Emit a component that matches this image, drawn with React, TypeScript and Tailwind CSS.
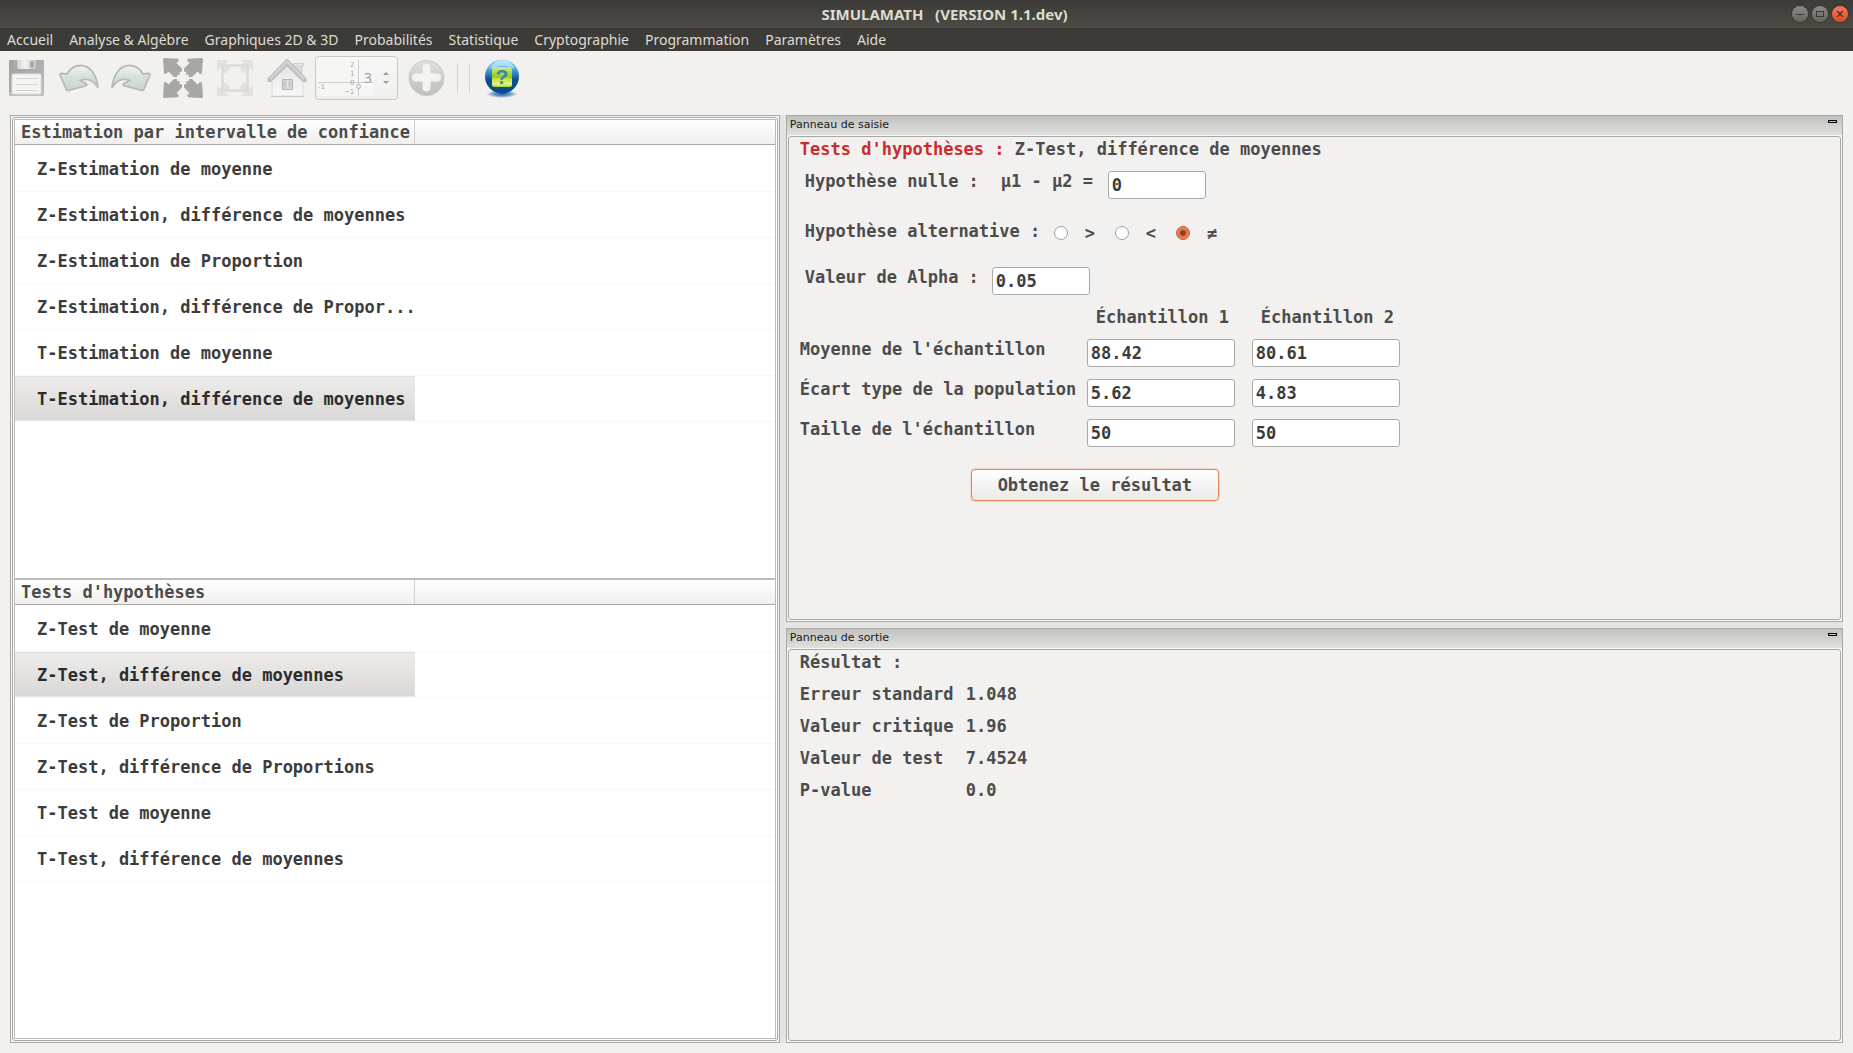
import type { ReactNode } from "react";

const menus = [
  "Accueil",
  "Analyse & Algèbre",
  "Graphiques 2D & 3D",
  "Probabilités",
  "Statistique",
  "Cryptographie",
  "Programmation",
  "Paramètres",
  "Aide",
];

const estimations = [
  "Z-Estimation de moyenne",
  "Z-Estimation, différence de moyennes",
  "Z-Estimation de Proportion",
  "Z-Estimation, différence de Propor...",
  "T-Estimation de moyenne",
  "T-Estimation, différence de moyennes",
];

const tests = [
  "Z-Test de moyenne",
  "Z-Test, différence de moyennes",
  "Z-Test de Proportion",
  "Z-Test, différence de Proportions",
  "T-Test de moyenne",
  "T-Test, différence de moyennes",
];

const samples = [
  { label: "Moyenne de l'échantillon", values: ["88.42", "80.61"] },
  { label: "Écart type de la population", values: ["5.62", "4.83"] },
  { label: "Taille de l'échantillon", values: ["50", "50"] },
];

const results = [
  ["Erreur standard", "1.048"],
  ["Valeur critique", "1.96"],
  ["Valeur de test", "7.4524"],
  ["P-value", "0.0"],
];

function SaveIcon() {
  return (
    <svg width="36" height="38" viewBox="0 0 36 38">
      <defs>
        <linearGradient id="disk" x1="0" y1="0" x2="1" y2="1">
          <stop offset="0" stopColor="#9f9f9e" />
          <stop offset=".6" stopColor="#b0b0ae" />
          <stop offset="1" stopColor="#bebdbb" />
        </linearGradient>
        <linearGradient id="shutter" x1="0" y1="0" x2="1" y2="0">
          <stop offset="0" stopColor="#d0d0d0" />
          <stop offset=".4" stopColor="#f3f3f3" />
          <stop offset="1" stopColor="#c8c8c8" />
        </linearGradient>
      </defs>
      <path d="M1 1h33l1 1v33q0 2-2 2H2q-2 0-2-2V2q0-1 1-1z" fill="url(#disk)" />
      <path d="M0 33h35v2q0 2-2 2H2q-2 0-2-2z" fill="#c4bfbe" />
      <path d="M4 1h24v10H6q-2 0-2-2z" fill="#a9a9a8" />
      <path d="M8 1h19v9H10q-2 0-2-2z" fill="url(#shutter)" />
      <rect x="21" y="2" width="4" height="7" fill="#a2a2a2" stroke="#c9c9c9" />
      <rect x="3" y="15" width="29" height="20" rx="1" fill="#f4f4f3" stroke="#dededd" />
      <path d="M7 19.500h22M7 25.500h22M7 31.500h22" stroke="#d4d4d3" />
    </svg>
  );
}

function CurvedArrow({ id }: { id: string }) {
  return (
    <svg width="40" height="28" viewBox="0 0 40 28">
      <defs>
        <linearGradient id={id} x1="0" y1="0" x2="0" y2="1">
          <stop offset="0" stopColor="#f2f4f2" />
          <stop offset=".45" stopColor="#d9e0d9" />
          <stop offset="1" stopColor="#cbd3cb" />
        </linearGradient>
      </defs>
      <path
        d="M1 11Q.8 9.500 2.200 9.500L8 10Q13 1.500 21.500 1.500C31 1.500 37.500 10 39 23.500 34 16 29 13.500 21 16.500l6.500 3.300q1 1-.3 1.800L9.500 26.400q-1.500.4-2.200-1z"
        fill={`url(#${id})`}
        stroke="#b7bcb7"
        strokeWidth="1.800"
        strokeLinejoin="round"
      />
    </svg>
  );
}

const cornerArrow = "M0 1L1 0 15 .8 16 2.500 13.500 5 19 10.500 19 13.500 16.500 14 17 17 14.500 16.500 14 19 11 19 5.500 13.500 3 16 1 15.500z";

function ExpandIcon() {
  return (
    <svg width="40" height="40" viewBox="0 0 40 40" fill="#a8a7a5">
      <path d={cornerArrow} />
      <path d={cornerArrow} transform="matrix(-1 0 0 1 40 0)" />
      <path d={cornerArrow} transform="matrix(1 0 0 -1 0 40)" />
      <path d={cornerArrow} transform="matrix(-1 0 0 -1 40 40)" />
    </svg>
  );
}

function FitIcon() {
  return (
    <svg width="38" height="38" viewBox="0 0 38 38" fill="#e3e1d9">
      <path d="M1 1h12l-3 3 4 5q-1 5-6 5L4 9l-3 3zM37 1H25l3 3-4 5q1 5 6 5l4-5 3 3zM1 37h12l-3-3 4-5q-1-5-6-5l-4 5-3-3zM37 37H25l3-3-4-5q1-5 6-5l4 5 3-3z" />
      <rect x="6.500" y="6.500" width="25" height="25" fill="none" stroke="#dbdbde" strokeWidth="2.500" />
    </svg>
  );
}

function HomeIcon() {
  return (
    <svg width="40" height="40" viewBox="0 0 40 40">
      <defs>
        <linearGradient id="wall" x1="0" y1="0" x2="0" y2="1">
          <stop offset="0" stopColor="#e2e2e1" />
          <stop offset="1" stopColor="#f8f8f8" />
        </linearGradient>
      </defs>
      <path d="M28 7h7v11h-7z" fill="#dcdcdb" stroke="#cececd" />
      <path d="M26.500 5.500h10v3h-10z" fill="#e2e2e1" stroke="#cfcfce" />
      <path d="M5 38V20L20 5l16 15v18z" fill="url(#wall)" stroke="#dcdcdb" />
      <path d="M4 38.500h33" stroke="#c8c8c7" />
      <path d="M1 20.500L20 1l19 19.500v3h-3L20 8 4 23.500H1z" fill="#c4c4c3" stroke="#b4b4b3" strokeWidth=".8" />
      <path d="M3 21L20 3.500 37 21" fill="none" stroke="#dadad9" strokeWidth="1.300" />
      <path d="M15.500 21.500h10v10h-10z" fill="#d3d5d7" stroke="#b4b4b4" />
      <path d="M20.500 22v9" stroke="#e4e4e4" />
      <path d="M18 23v6M23 23v6" stroke="#c2c7cc" strokeWidth="2" />
    </svg>
  );
}

function AxesIcon() {
  return (
    <svg width="56" height="36" viewBox="0 0 56 36" fontFamily="DejaVu Sans" fontSize="7" fontWeight="400" fill="#a9a9a8">
      <rect width="56" height="36" fill="#f6f6f5" />
      <path d="M0 22.500h56M40.500 0v36" stroke="#d0d0cf" />
      <circle cx="40.500" cy="26.500" r="2" fill="#eee" stroke="#b5b5b4" />
      <text x="32" y="7">2</text>
      <text x="32" y="16">1</text>
      <text x="32" y="25">0</text>
      <text x="26" y="34">−1</text>
      <text x="0" y="29">-1</text>
    </svg>
  );
}

function PlusIcon() {
  return (
    <svg width="37" height="38" viewBox="0 0 37 38">
      <defs>
        <linearGradient id="plus" x1="0" y1="0" x2="0" y2="1">
          <stop offset="0" stopColor="#e2e2e1" />
          <stop offset=".5" stopColor="#cccdcb" />
          <stop offset="1" stopColor="#bfc1bf" />
        </linearGradient>
      </defs>
      <circle cx="18.500" cy="19" r="17.500" fill="url(#plus)" stroke="#c8cac7" />
      <path d="M18.500 9v19.500M8 18.500h21" stroke="#f4f3f1" strokeWidth="8" strokeLinecap="round" />
    </svg>
  );
}

function HelpIcon() {
  return (
    <svg width="36" height="40" viewBox="0 0 36 40">
      <defs>
        <linearGradient id="ball" x1="0" y1="0" x2="0" y2="1">
          <stop offset="0" stopColor="#a9e0fb" />
          <stop offset=".28" stopColor="#4fa6de" />
          <stop offset=".6" stopColor="#0b4d90" />
          <stop offset="1" stopColor="#0a4a8c" />
        </linearGradient>
        <linearGradient id="tile" x1="0" y1="0" x2="0" y2="1">
          <stop offset="0" stopColor="#cde98a" />
          <stop offset=".5" stopColor="#8fce18" />
          <stop offset=".6" stopColor="#c3e536" />
          <stop offset=".85" stopColor="#e4f291" />
          <stop offset="1" stopColor="#a5d62c" />
        </linearGradient>
        <radialGradient id="shade">
          <stop offset="0" stopColor="#1c5a9c" />
          <stop offset=".6" stopColor="#5f8fc0" stopOpacity=".8" />
          <stop offset="1" stopColor="#8fb0d4" stopOpacity="0" />
        </radialGradient>
      </defs>
      <ellipse cx="18" cy="36" rx="16" ry="4" fill="url(#shade)" />
      <circle cx="18" cy="18.500" r="17" fill="url(#ball)" />
      <path d="M5 11Q9 3 18 2.500T31 11Q25 8 18 8T5 11z" fill="#c9ecfd" opacity=".65" />
      <rect x="8" y="9" width="20" height="20" rx="2" fill="url(#tile)" />
      <text x="18" y="26" textAnchor="middle" fontFamily="Liberation Sans" fontWeight="700" fontSize="21" fill="#3f86b4">
        ?
      </text>
    </svg>
  );
}

function ToolButton({ label, children }: { label: string; children: ReactNode }) {
  return (
    <button type="button" aria-label={label} className="flex w-10 shrink-0 items-center justify-center">
      {children}
    </button>
  );
}

function TreeList({ title, items, selected }: { title: string; items: string[]; selected: number }) {
  return (
    <section className="flex min-h-0 flex-1 basis-0 flex-col bg-white">
      <div className="flex h-[25px] shrink-0 border-b border-[#a9a8a5] bg-linear-to-b from-white to-[#f0efee]">
        <h2 className="w-[400px] shrink-0 border-r border-[#d3d2d0] pl-1.5 leading-6 text-[#4c4c4c]">{title}</h2>
      </div>
      <ul className="pt-px">
        {items.map((item, i) => (
          <li key={item} className="h-[46px] border-b border-[#f7f7f7]">
            <button
              type="button"
              className={
                i === selected
                  ? "h-full w-[400px] border border-dotted border-[#e8e6e4] bg-linear-to-b from-[#edecea] to-[#dad8d6] pl-[21px] text-left whitespace-nowrap text-[#2c2c2c]"
                  : "h-full w-[400px] border border-transparent pl-[21px] text-left whitespace-nowrap text-[#3c3c3c]"
              }
            >
              {item}
            </button>
          </li>
        ))}
      </ul>
    </section>
  );
}

function Dock({ title, className, children }: { title: string; className: string; children: ReactNode }) {
  return (
    <section className={className}>
      <header className="flex h-[19px] shrink-0 items-start justify-between bg-linear-to-b from-[#c1c1bf] to-[#e0e0de] pr-[5px] pl-[3px]">
        <h2 className="pt-px font-['DejaVu_Sans'] text-[11px] leading-4 font-normal text-[#1a1a1a]">{title}</h2>
        <button type="button" aria-label="Réduire" className="mt-1 h-[3px] w-[9px] border border-black bg-[#c1c1bf]" />
      </header>
      <div className="mx-px mt-px mb-px flex-1 rounded-[3px] border border-[#a9a8a5] bg-[#f2f1ef] px-[11px] pt-0.5">
        {children}
      </div>
    </section>
  );
}

function Field({ id, label, value, wide }: { id: string; label?: string; value: string; wide?: boolean }) {
  return (
    <input
      id={id}
      aria-label={label}
      defaultValue={value}
      className={
        wide
          ? "block h-7 w-[148px] rounded-[3px] border border-[#aaa9a6] bg-white px-[3px] text-[#3c3c3c] outline-none"
          : "block h-7 w-[98px] rounded-[3px] border border-[#aaa9a6] bg-white px-[3px] text-[#3c3c3c] outline-none"
      }
    />
  );
}

export default function App() {
  return (
    <div className="flex min-h-screen flex-col bg-[#f2f1ef] font-['DejaVu_Sans_Mono',monospace] text-[17px] leading-5 font-bold text-[#4c4c4c]">
      <header className="flex h-7 items-center bg-linear-to-b from-[#3c3b37] to-[#4d4b44] pr-[5px] pl-[97px] font-['Noto_Sans',sans-serif]">
        <h1 className="flex-1 text-center text-[15px] whitespace-pre text-[#dfdbd2]">SIMULAMATH   (VERSION 1.1.dev)</h1>
        <div className="flex gap-1">
          <button type="button" aria-label="Minimiser" className="flex size-4 items-center justify-center rounded-full bg-linear-to-b from-[#8b8a85] to-[#66655f] shadow-[0_0_1px_1px_#38372f]">
            <span className="h-px w-2 bg-[#3c3b37]" />
          </button>
          <button type="button" aria-label="Maximiser" className="flex size-4 items-center justify-center rounded-full bg-linear-to-b from-[#8b8a85] to-[#66655f] shadow-[0_0_1px_1px_#38372f]">
            <span className="h-1.5 w-2 border border-[#3c3b37]" />
          </button>
          <button type="button" aria-label="Fermer" className="flex size-4 items-center justify-center rounded-full bg-linear-to-b from-[#f2795a] to-[#e0481a] shadow-[0_0_1px_1px_#38372f]">
            <svg width="6" height="6" viewBox="0 0 6 6" stroke="#3c3b37" strokeWidth="1.500">
              <path d="M0 0l6 6M6 0L0 6" />
            </svg>
          </button>
        </div>
      </header>

      <nav className="flex h-[23px] items-center gap-4 bg-[#3c3b37] px-[7px] font-['Noto_Sans',sans-serif] text-[14px] font-normal text-[#dfdbd2]">
        {menus.map((menu) => (
          <button key={menu} type="button" className="whitespace-nowrap">
            {menu}
          </button>
        ))}
      </nav>

      <div className="flex h-[54px] items-center gap-3 px-[7px]">
        <ToolButton label="Enregistrer"><SaveIcon /></ToolButton>
        <ToolButton label="Annuler"><CurvedArrow id="undo" /></ToolButton>
        <ToolButton label="Rétablir"><span className="block -scale-x-100"><CurvedArrow id="redo" /></span></ToolButton>
        <ToolButton label="Agrandir"><ExpandIcon /></ToolButton>
        <ToolButton label="Ajuster"><FitIcon /></ToolButton>
        <ToolButton label="Vue initiale"><HomeIcon /></ToolButton>
        <div className="-mx-1 flex h-11 w-[83px] shrink-0 items-center rounded-[4px] border border-[#c9c8c5] bg-linear-to-b from-[#f8f8f7] to-[#f0efed] pl-0.5">
          <div className="grid w-14 shrink-0 items-center">
            <div className="col-start-1 row-start-1"><AxesIcon /></div>
            <input aria-label="Précision" defaultValue="3" className="col-start-1 row-start-1 w-14 bg-transparent pr-0.5 text-right font-['Noto_Sans',sans-serif] text-[14px] font-normal text-[#a3a29f] outline-none" />
          </div>
          <div className="flex flex-1 flex-col items-center gap-1.5">
            <button type="button" aria-label="Augmenter" className="border-x-[3px] border-b-[3px] border-x-transparent border-b-[#9c9b99]" />
            <button type="button" aria-label="Diminuer" className="border-x-[3px] border-t-[3px] border-x-transparent border-t-[#9c9b99]" />
          </div>
        </div>
        <div className="flex items-center gap-[11px]">
          <ToolButton label="Ajouter"><PlusIcon /></ToolButton>
          <div className="h-[30px] w-px bg-[#d4d3d0]" />
          <div className="h-[30px] w-px bg-[#d4d3d0]" />
        </div>
        <ToolButton label="Aide"><HelpIcon /></ToolButton>
      </div>

      <main className="mt-2.5 mr-2.5 mb-2.5 ml-2.5 flex flex-1 bg-[#e4e4e2]">
        <div className="flex w-[42%] shrink-0 flex-col border border-[#a9a8a5] bg-[#f7f7f6] p-px">
          <div className="flex flex-1 flex-col rounded-[3px] border border-[#a9a8a5] bg-white p-px">
            <div className="flex flex-1 flex-col gap-0.5 border border-[#bdbbb7] bg-[#bdbbb7]">
              <TreeList title="Estimation par intervalle de confiance" items={estimations} selected={5} />
              <TreeList title="Tests d'hypothèses" items={tests} selected={1} />
            </div>
          </div>
        </div>

        <div className="ml-1.5 flex min-w-0 flex-1 flex-col gap-1.5">
          <Dock title="Panneau de saisie" className="flex flex-[507] basis-0 flex-col border border-[#a9a8a5] bg-[#f7f7f6]">
            <h3>
              <span className="text-[#cc2b2e]">Tests d'hypothèses :</span> Z-Test, différence de moyennes
            </h3>
            <form className="mt-3" onSubmit={(e) => e.preventDefault()}>
              <div className="flex items-start pl-[5px]">
                <span className="w-[196px]">Hypothèse nulle :</span>
                <label htmlFor="null" className="w-[107px]">μ1 - μ2 =</label>
                <Field id="null" value="0" />
              </div>
              <fieldset className="mt-[22px] flex items-start pl-[5px]">
                <legend className="float-left w-[249px]">Hypothèse alternative :</legend>
                {[">", "<", "≠"].map((sign) => (
                  <label key={sign} className="mt-0.5 flex w-[61px] items-center gap-[17px]">
                    <input
                      type="radio"
                      name="alternative"
                      defaultChecked={sign === "≠"}
                      className="size-3.5 appearance-none rounded-full border border-[#a09f9c] bg-white checked:border-[#c9592f] checked:bg-[radial-gradient(circle,#7a4433_0_2px,#f07c4c_4px)]"
                    />
                    {sign}
                  </label>
                ))}
              </fieldset>
              <div className="mt-6 flex items-start pl-[5px]">
                <label htmlFor="alpha" className="w-[187px]">Valeur de Alpha :</label>
                <Field id="alpha" value="0.05" />
              </div>
              <table className="mt-3">
                <thead>
                  <tr>
                    <td className="w-[287px]" />
                    <th className="w-[165px] p-0 pb-3 pl-[9px] text-left">Échantillon 1</th>
                    <th className="w-[165px] p-0 pb-3 pl-[9px] text-left">Échantillon 2</th>
                  </tr>
                </thead>
                <tbody>
                  {samples.map((row, r) => (
                    <tr key={row.label} className="align-top">
                      <th className="p-0 text-left">{row.label}</th>
                      {row.values.map((value, c) => (
                        <td key={c} className="p-0 pb-3">
                          <Field id={`sample-${r}-${c}`} label={`${row.label}, échantillon ${c + 1}`} value={value} wide />
                        </td>
                      ))}
                    </tr>
                  ))}
                </tbody>
              </table>
              <button
                type="submit"
                className="mt-2.5 ml-[171px] h-8 w-[248px] rounded-[4px] border border-[#e5835e] bg-linear-to-b from-white to-[#eae9e7] shadow-[0_0_1px_1px_#f6d5c8]"
              >
                Obtenez le résultat
              </button>
            </form>
          </Dock>

          <Dock title="Panneau de sortie" className="flex flex-[415] basis-0 flex-col border border-[#a9a8a5] bg-[#f7f7f6]">
            <h3>Résultat :</h3>
            <table className="mt-1.5">
              <tbody>
                {results.map(([name, value]) => (
                  <tr key={name} className="h-8">
                    <th className="w-[166px] p-0 text-left">{name}</th>
                    <td className="p-0">{value}</td>
                  </tr>
                ))}
              </tbody>
            </table>
          </Dock>
        </div>
      </main>
    </div>
  );
}
